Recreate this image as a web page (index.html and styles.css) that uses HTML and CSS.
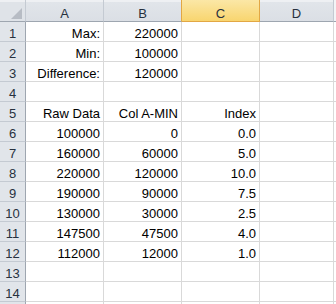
FILE: index.html
```html
<!DOCTYPE html>
<html lang="en">
<head>
    <meta charset="UTF-8">
    <meta name="viewport" content="width=device-width, initial-scale=1.0">
    <title>Index Sheet</title>
    <link rel="stylesheet" href="styles.css">
</head>
<body>
    <div class="sheet">
        <!-- column headers -->
        <div class="corner">
            <svg width="11" height="11" viewBox="0 0 11 11"><polygon points="0,11 11,0 11,11" fill="#b7bcc4"/></svg>
        </div>
        <div class="col-head">A</div>
        <div class="col-head before-active">B</div>
        <div class="col-head active">C</div>
        <div class="col-head">D</div>
        <div class="col-head edge"></div>

        <div class="row-head">1</div>
        <div class="cell">Max:</div>
        <div class="cell">220000</div>
        <div class="cell"></div>
        <div class="cell"></div>
        <div class="cell edge"></div>

        <div class="row-head">2</div>
        <div class="cell">Min:</div>
        <div class="cell">100000</div>
        <div class="cell"></div>
        <div class="cell"></div>
        <div class="cell edge"></div>

        <div class="row-head">3</div>
        <div class="cell">Difference:</div>
        <div class="cell">120000</div>
        <div class="cell"></div>
        <div class="cell"></div>
        <div class="cell edge"></div>

        <div class="row-head">4</div>
        <div class="cell"></div>
        <div class="cell"></div>
        <div class="cell"></div>
        <div class="cell"></div>
        <div class="cell edge"></div>

        <div class="row-head">5</div>
        <div class="cell">Raw Data</div>
        <div class="cell">Col A-MIN</div>
        <div class="cell">Index</div>
        <div class="cell"></div>
        <div class="cell edge"></div>

        <div class="row-head">6</div>
        <div class="cell">100000</div>
        <div class="cell">0</div>
        <div class="cell">0.0</div>
        <div class="cell"></div>
        <div class="cell edge"></div>

        <div class="row-head">7</div>
        <div class="cell">160000</div>
        <div class="cell">60000</div>
        <div class="cell">5.0</div>
        <div class="cell"></div>
        <div class="cell edge"></div>

        <div class="row-head">8</div>
        <div class="cell">220000</div>
        <div class="cell">120000</div>
        <div class="cell">10.0</div>
        <div class="cell"></div>
        <div class="cell edge"></div>

        <div class="row-head">9</div>
        <div class="cell">190000</div>
        <div class="cell">90000</div>
        <div class="cell">7.5</div>
        <div class="cell"></div>
        <div class="cell edge"></div>

        <div class="row-head">10</div>
        <div class="cell">130000</div>
        <div class="cell">30000</div>
        <div class="cell">2.5</div>
        <div class="cell"></div>
        <div class="cell edge"></div>

        <div class="row-head">11</div>
        <div class="cell">147500</div>
        <div class="cell">47500</div>
        <div class="cell">4.0</div>
        <div class="cell"></div>
        <div class="cell edge"></div>

        <div class="row-head">12</div>
        <div class="cell">112000</div>
        <div class="cell">12000</div>
        <div class="cell">1.0</div>
        <div class="cell"></div>
        <div class="cell edge"></div>

        <div class="row-head">13</div>
        <div class="cell"></div>
        <div class="cell"></div>
        <div class="cell"></div>
        <div class="cell"></div>
        <div class="cell edge"></div>

        <div class="row-head">14</div>
        <div class="cell"></div>
        <div class="cell"></div>
        <div class="cell"></div>
        <div class="cell"></div>
        <div class="cell edge"></div>

        <!-- row 15 only peeks in at the bottom edge -->
        <div class="row-head"></div>
        <div class="cell"></div>
        <div class="cell"></div>
        <div class="cell"></div>
        <div class="cell"></div>
        <div class="cell edge"></div>
    </div>
</body>
</html>
```

FILE: styles.css
```css
body {
    margin: 0;
    padding: 0;
    background: #fff;
    font-family: "Liberation Sans", Arial, sans-serif;
    font-size: 13px;
    color: #000;
    overflow: hidden;
}
.sheet {
    display: grid;
    grid-template-columns: 26px 78px 78px 78px 74px 1fr;
    grid-template-rows: 22px;
    grid-auto-rows: 20px;
    width: 336px;
    height: 304px;
    overflow: hidden;
}
.sheet > div {
    box-sizing: border-box;
    line-height: 15px;
    white-space: nowrap;
}
.corner {
    display: flex;
    justify-content: flex-end;
    align-items: flex-end;
    padding: 0 3px 2px 0;
    background: linear-gradient(#eef0f3 0, #eef0f3 2px, #dfe3e8 2px);
    border-right: 1px solid #c4cad2;
    border-bottom: 1px solid #9ea6b0;
}
.corner svg {
    display: block;
}
.col-head {
    padding-top: 6px;
    text-align: center;
    color: #27313e;
    background: linear-gradient(#eef0f3 0, #eef0f3 2px, #e1e5ea 2px, #dbdfe5);
    border-right: 1px solid #c4cad2;
    border-bottom: 1px solid #9ea6b0;
}
.col-head.before-active {
    border-right-color: #e2a744;
}
.col-head.active {
    background: linear-gradient(#fbe7a6, #f8d56f);
    border-right-color: #e2a744;
    border-bottom-color: #e2a744;
}
.col-head.edge {
    background: #f3f4f6;
    border-right: 0;
}
.row-head {
    padding-top: 4px;
    text-align: center;
    color: #27313e;
    background: #e1e5ea;
    border-right: 1px solid #9ea6b0;
    border-bottom: 1px solid #c4cad2;
}
.cell {
    padding: 4px 3px 0 0;
    text-align: right;
    border-right: 1px solid #d9d9d9;
    border-bottom: 1px solid #d9d9d9;
}
.cell.edge {
    border-right: 0;
}
```
